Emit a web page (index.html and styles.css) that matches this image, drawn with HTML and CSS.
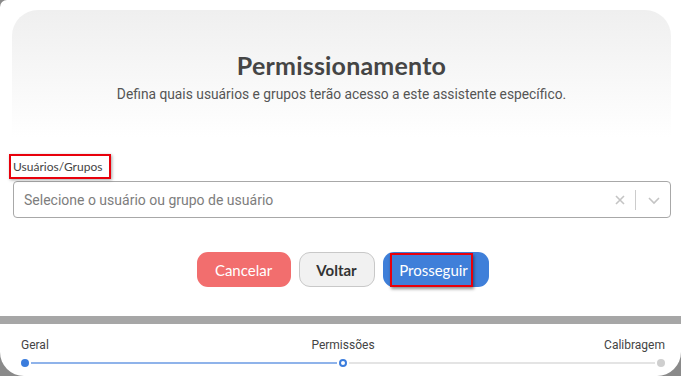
FILE: index.html
```html
<!DOCTYPE html>
<html lang="pt-BR">
<head>
    <meta charset="UTF-8">
    <meta name="viewport" content="width=device-width, initial-scale=1.0">
    <title>Permissionamento</title>
    <link rel="stylesheet" href="styles.css">
</head>
<body>
    <div class="modal">
        <div class="header">
            <h2>Permissionamento</h2>
            <p>Defina quais usuários e grupos terão acesso a este assistente específico.</p>
        </div>

        <div class="field">
            <span class="field-label">Usuários/Grupos</span>
            <div class="select">
                <span class="placeholder">Selecione o usuário ou grupo de usuário</span>
                <span class="clear">
                    <svg width="12" height="12" viewBox="0 0 12 12"><path d="M2 2l8 8M10 2l-8 8" stroke="#c4c4c4" stroke-width="1.6" fill="none"/></svg>
                </span>
                <span class="sep"></span>
                <span class="arrow">
                    <svg width="14" height="14" viewBox="0 0 14 14"><path d="M2 5l5 5 5-5" stroke="#c4c4c4" stroke-width="1.6" fill="none"/></svg>
                </span>
            </div>
        </div>

        <div class="actions">
            <button class="btn btn-cancel">Cancelar</button>
            <button class="btn btn-back">Voltar</button>
            <button class="btn btn-next"><span class="mark">Prosseguir</span></button>
        </div>
    </div>

    <div class="band"></div>

    <div class="stepper">
        <div class="step-labels">
            <span>Geral</span>
            <span>Permissões</span>
            <span class="last">Calibragem</span>
        </div>
        <div class="track">
            <span class="dot done"></span>
            <span class="line active"></span>
            <span class="dot current"></span>
            <span class="line"></span>
            <span class="dot todo"></span>
        </div>
    </div>
</body>
</html>
```

FILE: styles.css
```css
body { margin: 0; background: #8a8a8a; font-family: Roboto, "Liberation Sans", sans-serif; width: 681px; height: 376px; overflow: hidden; }
.modal { background: #fff; border-top-left-radius: 7px; padding: 10px 10px 0 12px; height: 306px; }
.header { background: linear-gradient(#efefef, #fff); border-radius: 26px 26px 0 0; height: 126px; text-align: center; padding-top: 1px; }
.header h2 { font-family: Lato, "Noto Sans", sans-serif; font-size: 25px; font-weight: 700; color: #454545; margin: 39px 0 0; letter-spacing: 0.2px; }
.header p { font-size: 13.8px; color: #555; margin: 6px 0 0; }
.field { margin-top: 17px; margin-left: 1px; }
.field-label { display: inline-block; font-family: Lato, "Noto Sans", sans-serif; font-size: 12px; color: #444; border: 2px solid #e8000b; padding: 3px 7px 3px 2px; margin-left: -4px; box-shadow: 1px 1px 3px rgba(0, 0, 0, 0.35); }
.select { display: flex; align-items: center; height: 35px; margin-top: 2px; border: 1px solid #a8a8a8; border-radius: 4px; padding-left: 10px; }
.placeholder { flex: 1; font-size: 14px; color: #7d7d7d; }
.clear { display: flex; padding: 0 9px; }
.sep { width: 1px; height: 20px; background: #ccc; }
.arrow { display: flex; padding: 0 9px 0 11px; }
.actions { display: flex; justify-content: center; gap: 8px; margin-top: 34px; margin-left: 2px; }
.btn { font-family: Lato, "Noto Sans", sans-serif; font-size: 15px; height: 35px; border-radius: 11px; border: none; cursor: pointer; }
.btn-cancel { background: #f26e6e; color: #fff; width: 94px; }
.btn-back { background: #f1f1f1; color: #333; border: 1px solid #c8c8c8; width: 76px; font-weight: 700; }
.btn-next { background: #3f7fd9; color: #fff; width: 106px; padding: 0 16px 0 7px; }
.btn-next .mark { display: block; border: 2px solid #e8000b; height: 30px; line-height: 30px; padding: 0 2px 0 7px; box-shadow: 1px 2px 3px rgba(0, 0, 0, 0.45); }
.band { height: 8px; background: #a6a6a6; }
.stepper { background: #fff; border-radius: 0 0 24px 24px; height: 52px; padding: 0 16px 0 21px; }
.step-labels { display: grid; grid-template-columns: 1fr auto 1fr; font-size: 12px; color: #444; padding-top: 14px; }
.step-labels .last { text-align: right; }
.track { display: flex; align-items: center; margin-top: 7px; }
.dot { width: 8px; height: 8px; border-radius: 50%; box-sizing: border-box; }
.dot.done { background: #3b7ddd; }
.dot.current { border: 2px solid #3b7ddd; background: #fff; }
.dot.todo { background: #cfcfcf; }
.line { flex: 1; height: 2px; background: #e4e4e4; margin: 0 2px; }
.line.active { background: #8fb3ea; }
```
